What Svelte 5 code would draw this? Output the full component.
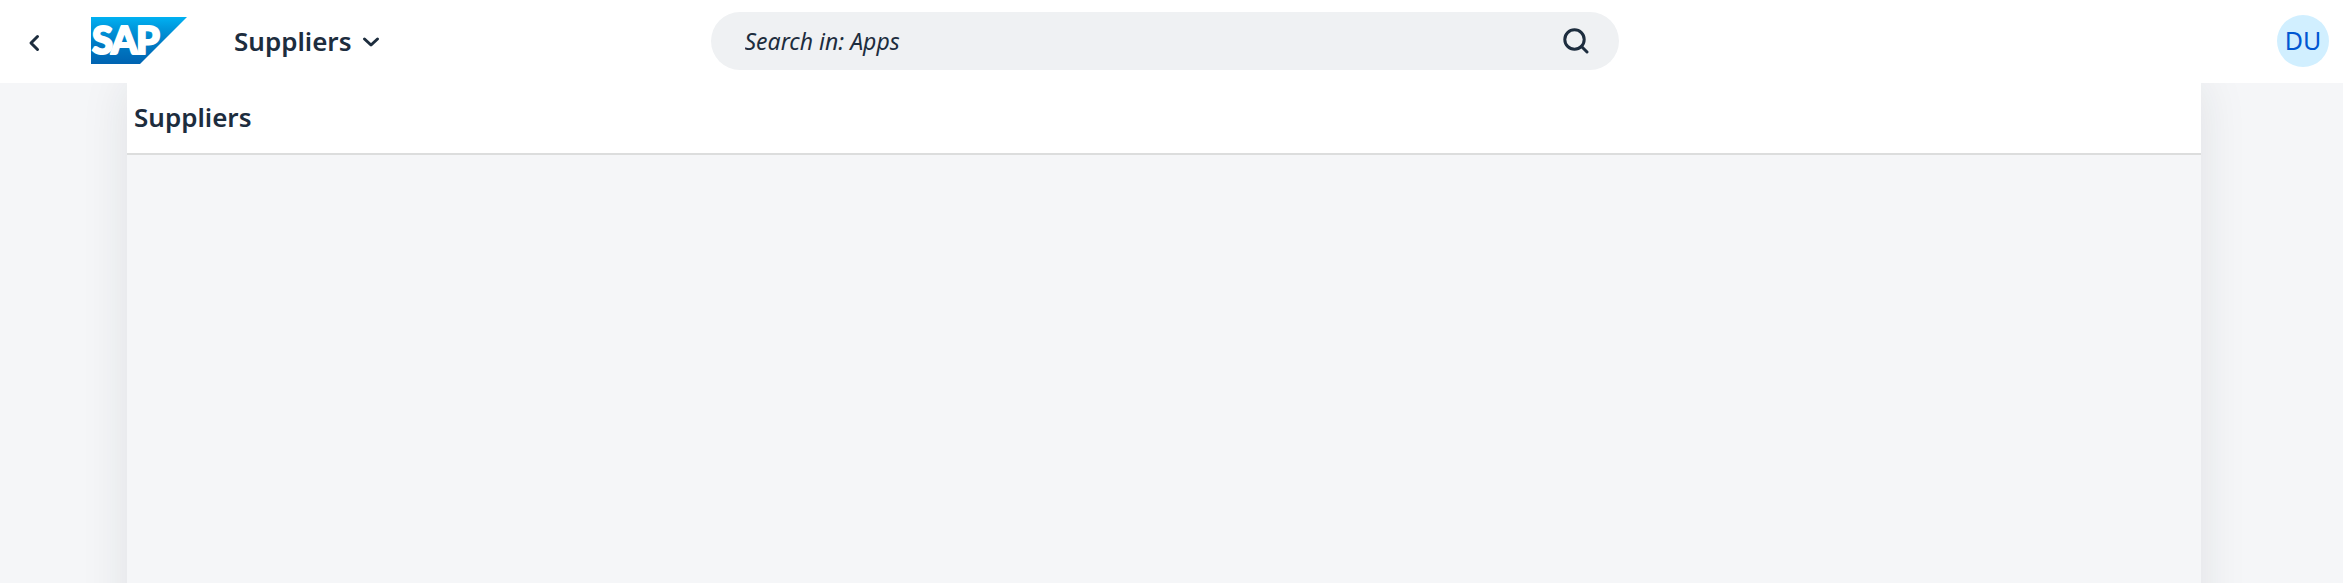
<script>
  const title = 'Suppliers';
  const initials = 'DU';
  let query = $state('');
</script>

<div class="shell">
  <header class="bar">
    <div class="start">
      <button class="back" type="button" aria-label="Back">
        <svg width="12" height="18" viewBox="0 0 12 18" aria-hidden="true">
          <path d="M9.5 2.5 3 9l6.500 6.500" />
        </svg>
      </button>
      <a class="logo" href="#home" aria-label="SAP">
        <svg width="96" height="47" viewBox="0 0 96 47" aria-hidden="true">
          <defs>
            <linearGradient id="sky" x1="0" y1="0" x2="0" y2="1">
              <stop offset="0" stop-color="#00b1f2" />
              <stop offset="0.22" stop-color="#009ade" />
              <stop offset="0.55" stop-color="#007cc5" />
              <stop offset="1" stop-color="#0063b1" />
            </linearGradient>
          </defs>
          <path fill="url(#sky)" d="M0 0h96L49 47H0z" />
          <g class="mark">
            <text x="1" y="37">S</text>
            <text x="20" y="37">A</text>
            <text x="45" y="37">P</text>
          </g>
        </svg>
      </a>
      <button class="menu" type="button" aria-haspopup="true">
        {title}
        <svg width="18" height="14" viewBox="0 0 18 14" aria-hidden="true">
          <path d="M2.500 5 9 11l6.500-6" />
        </svg>
      </button>
    </div>

    <form class="search" role="search" onsubmit={(e) => e.preventDefault()}>
      <input type="text" aria-label="Search" placeholder="Search in: Apps" bind:value={query} />
      <button type="submit" aria-label="Search">
        <svg width="26" height="26" viewBox="0 0 26 26" aria-hidden="true">
          <circle cx="11.500" cy="11.500" r="9.700" />
          <path d="m18.500 18.500 5.500 5.500" />
        </svg>
      </button>
    </form>

    <div class="end">
      <button class="avatar" type="button" aria-label="Profile">{initials}</button>
    </div>
  </header>

  <main class="page">
    <div class="titlebar"><h1>{title}</h1></div>
  </main>
</div>

<style>
  :global(body) {
    background: #f5f6f8;
  }

  .shell {
    display: flex;
    flex-direction: column;
    height: 100vh;
    overflow: hidden;
    color: #1d2d3e;
    font-family: 'Noto Sans', 'Open Sans', sans-serif;
    font-size: 26px;
  }

  button,
  input {
    margin: 0;
    padding: 0;
    border: 0;
    background: none;
    color: inherit;
    font: inherit;
  }

  button {
    cursor: pointer;
  }

  svg {
    display: block;
    fill: none;
    stroke: #1d2d3e;
    stroke-width: 3;
    stroke-linecap: round;
    stroke-linejoin: round;
  }

  .bar {
    position: relative;
    z-index: 1;
    display: grid;
    flex: none;
    grid-template-columns: minmax(max-content, 1fr) minmax(0, 908px) minmax(max-content, 1fr);
    align-items: center;
    box-sizing: border-box;
    height: 83px;
    padding: 0 14px 1px 0;
    background: #fff;
  }

  .start {
    display: flex;
    align-items: center;
  }

  .back {
    display: grid;
    place-items: center;
    width: 50px;
    height: 50px;
    margin: 4px 32px 0 9px;
  }

  .logo {
    margin-bottom: 2px;
  }

  .logo svg {
    stroke: none;
  }

  .mark {
    fill: #fff;
    stroke: #fff;
    stroke-width: 2;
    font-family: Lato, sans-serif;
    font-size: 38px;
    font-weight: 900;
  }

  .menu {
    display: flex;
    align-items: center;
    gap: 11px;
    margin-left: 47px;
    font-size: 26px;
    font-weight: 600;
    line-height: 36px;
  }

  .search {
    display: flex;
    align-items: center;
    height: 58px;
    padding: 0 30px 0 34px;
    border-radius: 29px;
    background: #eff1f3;
  }

  .search input {
    flex: 1;
    min-width: 0;
    outline: none;
    font-size: 23px;
    font-style: italic;
  }

  .search input::placeholder {
    color: #1d2d3e;
    opacity: 1;
  }

  .end {
    display: flex;
    justify-content: flex-end;
  }

  .avatar {
    width: 52px;
    height: 52px;
    padding-bottom: 2px;
    border-radius: 50%;
    background: #d1efff;
    color: #0057d2;
    font-size: 25px;
  }

  .page {
    flex: 1;
    margin: 0 142px -60px 127px;
    background: #f5f6f8;
    box-shadow: 0 0 44px rgba(34, 40, 46, 0.1);
  }

  .titlebar {
    display: flex;
    align-items: center;
    box-sizing: border-box;
    height: 72px;
    padding: 0 7px 2px;
    border-bottom: 2px solid #dcdddd;
    background: #fff;
  }

  h1 {
    margin: 0;
    font-size: 26px;
    font-weight: 600;
    line-height: 36px;
  }
</style>
